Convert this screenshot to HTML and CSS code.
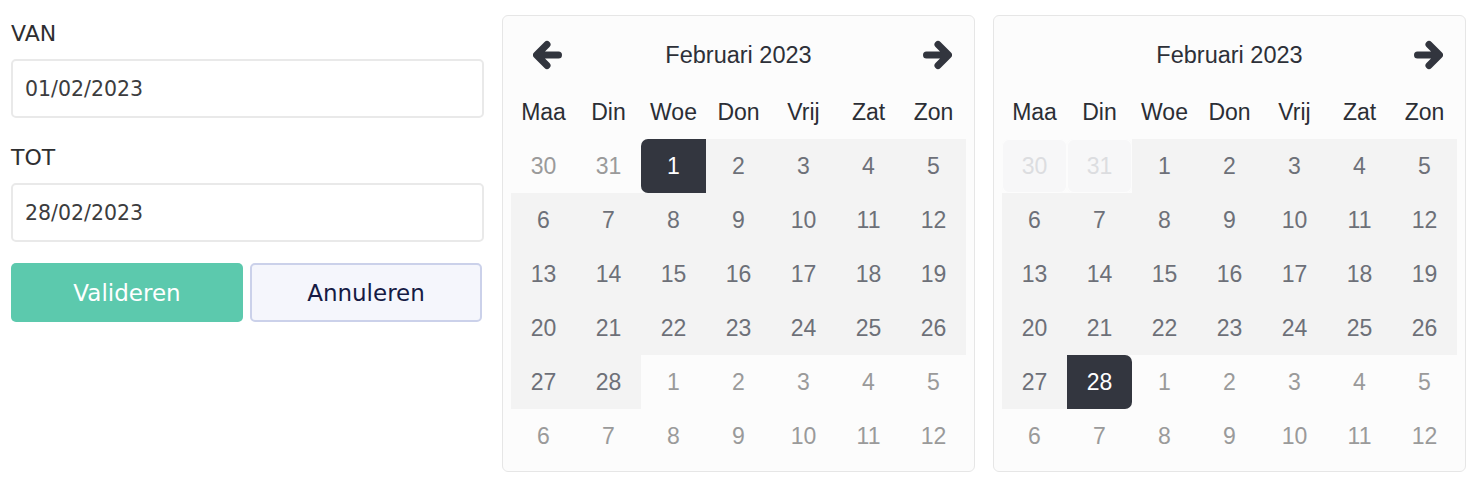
FILE: index.html
```html
<!DOCTYPE html>
<html lang="nl">
<head>
<meta charset="utf-8">
<title>Periode kiezen</title>
<link rel="stylesheet" href="styles.css">
</head>
<body>
<div class="page">
  <form class="panel">
    <div class="field">
      <label class="label" for="van">VAN</label>
      <input class="input" id="van" type="text" value="01/02/2023">
    </div>
    <div class="field">
      <label class="label" for="tot">TOT</label>
      <input class="input" id="tot" type="text" value="28/02/2023">
    </div>
    <div class="actions">
      <button type="button" class="btn btn-primary">Valideren</button>
      <button type="button" class="btn btn-secondary">Annuleren</button>
    </div>
  </form>

  <div class="calendar">
    <div class="cal-head">
      <span class="nav nav-prev">
        <svg width="29" height="30" viewBox="0 0 29 30"><path d="M25.5 15H4M14 4.5L3.5 15L14 25.5" fill="none" stroke="#32353e" stroke-width="7" stroke-linecap="round" stroke-linejoin="round"/></svg>
      </span>
      <span class="cal-title">Februari 2023</span>
      <span class="nav nav-next">
        <svg width="29" height="30" viewBox="0 0 29 30"><path d="M3.5 15H25M15 4.5L25.5 15L15 25.5" fill="none" stroke="#32353e" stroke-width="7" stroke-linecap="round" stroke-linejoin="round"/></svg>
      </span>
    </div>
    <table class="cal-grid">
      <thead>
        <tr><th>Maa</th><th>Din</th><th>Woe</th><th>Don</th><th>Vrij</th><th>Zat</th><th>Zon</th></tr>
      </thead>
      <tbody>
        <tr><td class="muted">30</td><td class="muted">31</td><td class="sel sel-start">1</td><td class="range">2</td><td class="range">3</td><td class="range">4</td><td class="range">5</td></tr>
        <tr><td class="range">6</td><td class="range">7</td><td class="range">8</td><td class="range">9</td><td class="range">10</td><td class="range">11</td><td class="range">12</td></tr>
        <tr><td class="range">13</td><td class="range">14</td><td class="range">15</td><td class="range">16</td><td class="range">17</td><td class="range">18</td><td class="range">19</td></tr>
        <tr><td class="range">20</td><td class="range">21</td><td class="range">22</td><td class="range">23</td><td class="range">24</td><td class="range">25</td><td class="range">26</td></tr>
        <tr><td class="range">27</td><td class="range">28</td><td class="muted">1</td><td class="muted">2</td><td class="muted">3</td><td class="muted">4</td><td class="muted">5</td></tr>
        <tr><td class="muted">6</td><td class="muted">7</td><td class="muted">8</td><td class="muted">9</td><td class="muted">10</td><td class="muted">11</td><td class="muted">12</td></tr>
      </tbody>
    </table>
  </div>

  <div class="calendar">
    <div class="cal-head">
      <span class="nav nav-prev"></span>
      <span class="cal-title">Februari 2023</span>
      <span class="nav nav-next">
        <svg width="29" height="30" viewBox="0 0 29 30"><path d="M3.5 15H25M15 4.5L25.5 15L15 25.5" fill="none" stroke="#32353e" stroke-width="7" stroke-linecap="round" stroke-linejoin="round"/></svg>
      </span>
    </div>
    <table class="cal-grid">
      <thead>
        <tr><th>Maa</th><th>Din</th><th>Woe</th><th>Don</th><th>Vrij</th><th>Zat</th><th>Zon</th></tr>
      </thead>
      <tbody>
        <tr><td class="disabled">30</td><td class="disabled">31</td><td class="range">1</td><td class="range">2</td><td class="range">3</td><td class="range">4</td><td class="range">5</td></tr>
        <tr><td class="range">6</td><td class="range">7</td><td class="range">8</td><td class="range">9</td><td class="range">10</td><td class="range">11</td><td class="range">12</td></tr>
        <tr><td class="range">13</td><td class="range">14</td><td class="range">15</td><td class="range">16</td><td class="range">17</td><td class="range">18</td><td class="range">19</td></tr>
        <tr><td class="range">20</td><td class="range">21</td><td class="range">22</td><td class="range">23</td><td class="range">24</td><td class="range">25</td><td class="range">26</td></tr>
        <tr><td class="range">27</td><td class="sel sel-end">28</td><td class="muted">1</td><td class="muted">2</td><td class="muted">3</td><td class="muted">4</td><td class="muted">5</td></tr>
        <tr><td class="muted">6</td><td class="muted">7</td><td class="muted">8</td><td class="muted">9</td><td class="muted">10</td><td class="muted">11</td><td class="muted">12</td></tr>
      </tbody>
    </table>
  </div>
</div>
</body>
</html>
```

FILE: styles.css
```css
* { box-sizing: border-box; }

html, body {
  margin: 0;
  padding: 0;
  background: #ffffff;
}

.page {
  display: flex;
  align-items: flex-start;
  gap: 18px;
  padding: 15px 0 0 11px;
}

/* left form panel */
.panel {
  width: 473px;
  padding-top: 6px;
  font-family: "DejaVu Sans", "Noto Sans", sans-serif;
}

.field {
  display: flex;
  flex-direction: column;
  margin-bottom: 27px;
}

.field + .field {
  margin-bottom: 21px;
}

.label {
  font-size: 22px;
  line-height: 26px;
  color: #2e2e30;
  margin-bottom: 12px;
}

.input {
  height: 59px;
  width: 100%;
  border: 2px solid #e9e9e9;
  border-radius: 5px;
  background: #ffffff;
  padding: 0 12px;
  font-family: "DejaVu Sans", "Noto Sans", sans-serif;
  font-size: 20.5px;
  color: #3c3c3e;
  outline: none;
}

.actions {
  display: grid;
  grid-template-columns: 232px 232px;
  gap: 7px;
}

.btn {
  height: 59px;
  border-radius: 5px;
  font-family: "DejaVu Sans", "Noto Sans", sans-serif;
  font-size: 23px;
  cursor: pointer;
  padding: 0;
}

.btn-primary {
  background: #5cc9ad;
  border: 0;
  color: #ffffff;
}

.btn-secondary {
  background: #f5f6fc;
  border: 2px solid #cbd1ea;
  color: #161b44;
}

/* calendars */
.calendar {
  width: 473px;
  background: #fcfcfc;
  border: 1px solid #e6e6e6;
  border-radius: 6px;
  padding: 14px 8px 8px 8px;
  font-family: "Liberation Sans", Arial, sans-serif;
}

.cal-head {
  display: grid;
  grid-template-columns: 1fr auto 1fr;
  align-items: center;
  height: 50px;
  margin-bottom: 5px;
}

.nav {
  display: flex;
  align-items: center;
  height: 30px;
}

.nav-prev {
  justify-self: start;
  margin-left: 22px;
}

.nav-next {
  justify-self: end;
  margin-right: 14px;
}

.cal-title {
  font-size: 23.5px;
  color: #2d3038;
}

.cal-grid {
  width: 100%;
  table-layout: fixed;
  border-collapse: separate;
  border-spacing: 0;
}

.cal-grid th,
.cal-grid td {
  height: 54px;
  padding: 0;
  text-align: center;
  vertical-align: middle;
  font-size: 23px;
  font-weight: normal;
}

.cal-grid th {
  color: #2b2e35;
}

.cal-grid td {
  color: #6d7078;
}

.cal-grid td.muted {
  color: #9a9a9a;
}

.cal-grid td.range {
  background: #f3f3f3;
}

.cal-grid td.sel {
  background: #33363f;
  color: #ffffff;
}

.cal-grid td.sel-start {
  border-radius: 7px 0 0 7px;
}

.cal-grid td.sel-end {
  border-radius: 0 7px 7px 0;
}

.cal-grid td.disabled {
  background: #f7f7f8;
  color: #dcdde0;
  border-radius: 7px;
  box-shadow: inset 0 0 0 1px #fcfcfc;
}
```
